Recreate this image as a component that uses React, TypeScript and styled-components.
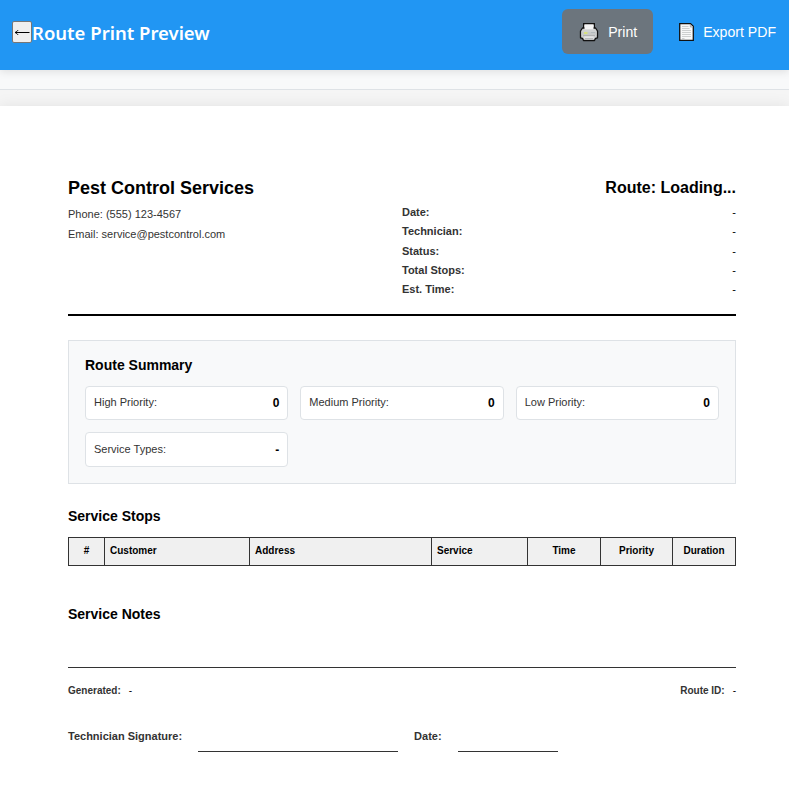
import React from "react";
import styled, { createGlobalStyle } from "styled-components";

const GlobalStyle = createGlobalStyle`
  * { box-sizing: border-box; }
  body {
    margin: 0;
    background: #f5f5f5;
    color: #000;
    font-family: "Liberation Sans", Arial, sans-serif;
    overflow: hidden;
  }
  h1, h2, h3, p { margin: 0; }
`;

const Page = styled.div`
  display: flex;
  flex-direction: column;
  height: 797px;
  overflow: hidden;
`;

const Header = styled.header`
  position: relative;
  z-index: 1;
  flex: none;
  display: flex;
  align-items: center;
  height: 70px;
  padding: 0 0 7px 12px;
  background: #2196f3;
  box-shadow: 0 2px 8px rgba(0, 0, 0, 0.1);
`;

const BackButton = styled.button`
  display: flex;
  align-items: center;
  justify-content: center;
  width: 20px;
  height: 22px;
  margin-top: 1px;
  padding: 0;
  border: 1px solid #767676;
  border-radius: 2px;
  background: #efefef;
`;

const Title = styled.h1`
  flex: 1;
  padding-top: 1px;
  font: 600 18.5px/27px "Noto Sans", "Open Sans", sans-serif;
  color: #fff;
  white-space: nowrap;
`;

const ActionButton = styled.button<{ $solid?: boolean }>`
  display: flex;
  align-items: center;
  gap: 8px;
  height: 45px;
  padding: 0 ${(p) => (p.$solid ? 16 : 13)}px 0 16px;
  margin-left: ${(p) => (p.$solid ? 0 : 8)}px;
  border: 0;
  border-radius: 6px;
  background: ${(p) => (p.$solid ? "#6c757d" : "transparent")};
  color: #fff;
  font: 400 14.1px/20px "Liberation Sans", Arial, sans-serif;
  white-space: nowrap;
`;

const Strip = styled.div`
  flex: none;
  height: 20px;
  background: #f8f9fa;
  border-bottom: 1px solid #dee2e6;
`;

const Paper = styled.main`
  flex: 1;
  margin-top: 16px;
  padding: 71px 53px 0 68px;
  background: #fff;
  box-shadow: 0 2px 16px rgba(0, 0, 0, 0.1);
`;

const DocumentHeader = styled.section`
  display: grid;
  grid-template-columns: 1fr 1fr;
  height: 139px;
  border-bottom: 2px solid #000;
`;

const CompanyName = styled.h2`
  padding-top: 1px;
  margin-bottom: 5px;
  font-size: 18px;
  line-height: 21px;
`;

const ContactLine = styled.p`
  height: 20px;
  color: #333;
  font-size: 11px;
  line-height: 20px;
`;

const RouteName = styled.h2`
  margin-bottom: 5px;
  font-size: 16px;
  line-height: 21px;
  text-align: right;
`;

const InfoRow = styled.div`
  display: flex;
  justify-content: space-between;
  height: 19.25px;
  font-size: 11px;
  line-height: 19px;
`;

const Label = styled.span`
  color: #333;
  font-weight: bold;
`;

const Summary = styled.section`
  height: 144px;
  margin-top: 24px;
  padding: 16px;
  border: 1px solid #dee2e6;
  background: #f8f9fa;
`;

const SectionTitle = styled.h3`
  font-size: 14px;
  line-height: 17px;
`;

const SummaryGrid = styled.div`
  display: grid;
  grid-template-columns: repeat(3, 1fr);
  grid-auto-rows: 34.4px;
  gap: 12px;
  margin-top: 12px;
`;

const SummaryCard = styled.div`
  display: flex;
  align-items: center;
  justify-content: space-between;
  padding: 0 8px 2px;
  border: 1px solid #dee2e6;
  border-radius: 4px;
  background: #fff;
  color: #333;
  font-size: 11px;
`;

const Count = styled.b`
  padding-top: 2px;
  color: #000;
  font-size: 12px;
`;

const Stops = styled.section`
  margin-top: 24px;
`;

const StopsTable = styled.table`
  width: 668px;
  margin-top: 12px;
  border-collapse: collapse;
  table-layout: fixed;
`;

const HeadCell = styled.th<{ $width: number; $center?: boolean }>`
  width: ${(p) => p.$width}px;
  height: 28px;
  padding: 0 5px 2px;
  border: 1px solid #333;
  background: #f0f0f0;
  font-size: 10px;
  text-align: ${(p) => (p.$center ? "center" : "left")};
`;

const Notes = styled.section`
  height: 61px;
  margin-top: 40px;
`;

const DocumentFooter = styled.footer`
  border-top: 1px solid #333;
  padding-top: 16px;
`;

const MetaRow = styled.div`
  display: flex;
  justify-content: space-between;
  font-size: 10px;
  line-height: 14px;
`;

const Meta = styled.span`
  display: flex;
  gap: 8px;
`;

const SignatureRow = styled.div`
  display: flex;
  gap: 16px;
  margin-top: 31px;
  font-size: 11px;
  line-height: 15px;
`;

const SignatureLine = styled.span<{ $width: number }>`
  width: ${(p) => p.$width}px;
  height: 23px;
  border-bottom: 1px solid #333;
`;

const ArrowIcon = () => (
  <svg width="16" height="12" viewBox="0 0 16 12" fill="none" stroke="#000">
    <path d="M1 6.5H15.5" />
    <path d="M4 4C3.5 5 2.5 6 1 6.5C2.5 7 3.5 8 4 9" />
  </svg>
);

const PrinterIcon = () => (
  <svg width="22" height="20" viewBox="0 0 22 20">
    <path d="M5.7 7V1.7H16.3V7" fill="#f7f7f7" stroke="#111" strokeWidth="1.4" />
    <path d="M4.5 6H17.5L19.5 9V15.8L17.5 16.3L16.5 18.5H5.5L4.5 16.3L2.5 15.8V9Z" fill="#d0d2d2" stroke="#111" strokeWidth="1.3" strokeLinejoin="round" />
    <path d="M6.5 2.5H15.5V7.3H6.5Z" fill="#f5f5f5" />
    <path d="M3.5 10H18.5V13H3.5Z" fill="#c8caca" />
    <path d="M6 11H9.5" stroke="#dce866" strokeWidth="1.5" />
    <path d="M13 10.5H17" stroke="#b3babd" />
    <path d="M5 13.7H17" stroke="#aaa" />
    <path d="M6.3 14.3H15.7V17.5H6.3Z" fill="#e4e4e4" />
    <path d="M7 16.5H15" stroke="#b8babb" />
  </svg>
);

const PageIcon = () => (
  <svg width="18" height="20" viewBox="-1 0 18 20">
    <path d="M1.7 1.7H12.5L15.3 4.4V18.3H1.7Z" fill="#f8f8f8" stroke="#111" strokeWidth="1.3" />
    <path d="M12.3 2.2V5H14.8" fill="#ddd" stroke="#999" strokeWidth=".7" />
    <path d="M4 4.5H10.5M4 6.5H11.5M4 8.5H13M4 10.5H13M4 12.5H13M4 14.5H13M4 16.5H6.5" stroke="#c7c9ca" strokeWidth=".9" />
  </svg>
);

const routeInfo = ["Date:", "Technician:", "Status:", "Total Stops:", "Est. Time:"];

const summaryItems = [
  { label: "High Priority:", value: "0" },
  { label: "Medium Priority:", value: "0" },
  { label: "Low Priority:", value: "0" },
  { label: "Service Types:", value: "-" },
];

const columns = [
  { label: "#", width: 36, center: true },
  { label: "Customer", width: 145 },
  { label: "Address", width: 182 },
  { label: "Service", width: 96 },
  { label: "Time", width: 73, center: true },
  { label: "Priority", width: 72, center: true },
  { label: "Duration", width: 63, center: true },
];

export default function App() {
  return (
    <Page>
      <GlobalStyle />
      <Header>
        <BackButton aria-label="Back"><ArrowIcon /></BackButton>
        <Title>Route Print Preview</Title>
        <ActionButton $solid><PrinterIcon />Print</ActionButton>
        <ActionButton><PageIcon />Export PDF</ActionButton>
      </Header>
      <Strip />
      <Paper>
        <DocumentHeader>
          <div>
            <CompanyName>Pest Control Services</CompanyName>
            <ContactLine>Phone: (555) 123-4567</ContactLine>
            <ContactLine>Email: service@pestcontrol.com</ContactLine>
          </div>
          <div>
            <RouteName>Route: Loading...</RouteName>
            {routeInfo.map((label) => (
              <InfoRow key={label}><Label>{label}</Label><span>-</span></InfoRow>
            ))}
          </div>
        </DocumentHeader>
        <Summary>
          <SectionTitle>Route Summary</SectionTitle>
          <SummaryGrid>
            {summaryItems.map((item) => (
              <SummaryCard key={item.label}>
                <span>{item.label}</span>
                <Count>{item.value}</Count>
              </SummaryCard>
            ))}
          </SummaryGrid>
        </Summary>
        <Stops>
          <SectionTitle>Service Stops</SectionTitle>
          <StopsTable>
            <thead>
              <tr>
                {columns.map((c) => (
                  <HeadCell key={c.label} $width={c.width} $center={c.center}>{c.label}</HeadCell>
                ))}
              </tr>
            </thead>
          </StopsTable>
        </Stops>
        <Notes><SectionTitle>Service Notes</SectionTitle></Notes>
        <DocumentFooter>
          <MetaRow>
            <Meta><Label>Generated:</Label><span>-</span></Meta>
            <Meta><Label>Route ID:</Label><span>-</span></Meta>
          </MetaRow>
          <SignatureRow>
            <Label>Technician Signature:</Label>
            <SignatureLine $width={200} />
            <Label>Date:</Label>
            <SignatureLine $width={100} />
          </SignatureRow>
        </DocumentFooter>
      </Paper>
    </Page>
  );
}
